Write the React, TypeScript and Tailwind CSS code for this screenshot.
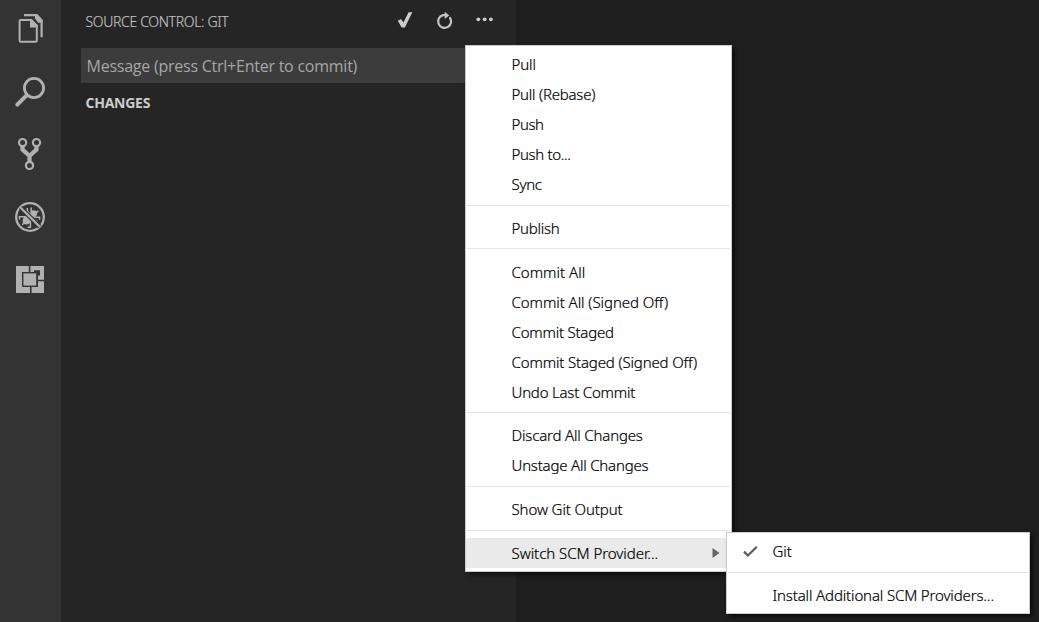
import type { ReactNode } from 'react';

function ActivityIcon({ viewBox, height, children }: { viewBox: string; height: string; children: ReactNode }) {
  return (
    <button className={`block w-full ${height}`}>
      <svg viewBox={viewBox} className="block h-full w-full" fill="none" stroke="#b1b1b1">
        {children}
      </svg>
    </button>
  );
}

function ActivityBar() {
  return (
    <nav className="flex w-[61px] shrink-0 flex-col bg-[#333333]">
      <ActivityIcon viewBox="0 0 61 60" height="h-[60px]">
        <path d="M24 15.2H36.6L41.6 20.6V37.2" strokeWidth="2.2" />
        <path d="M35 14.2H37.3L42.7 20V22.8H38.2L35 18.5Z" fill="#b1b1b1" stroke="none" />
        <path d="M20.8 20H31.2L36.8 25.6V40.6Q36.8 41.8 35.6 41.8H20.8Q19.6 41.8 19.6 40.6V21.2Q19.6 20 20.8 20Z" strokeWidth="2" />
        <path d="M30 19.2H31.8L37.7 25.2V27.4H30Z" fill="#b1b1b1" stroke="none" />
      </ActivityIcon>
      <ActivityIcon viewBox="0 60 61 63" height="h-[63px]">
        <circle cx="34" cy="88" r="9.6" strokeWidth="2.8" />
        <path d="M26.6 95.4L17.3 104.7" strokeWidth="4" strokeLinecap="round" />
      </ActivityIcon>
      <ActivityIcon viewBox="0 123 61 63" height="h-[63px]">
        <path d="M22.5 146V149.5L29.5 156L36.5 149.5V146M29.5 155V162" strokeWidth="4.2" />
        <circle cx="22.6" cy="142.6" r="3.6" strokeWidth="2.2" fill="#333333" />
        <circle cx="36.5" cy="142.6" r="3.6" strokeWidth="2.2" fill="#333333" />
        <circle cx="29.5" cy="165.4" r="3.6" strokeWidth="2.2" fill="#333333" />
      </ActivityIcon>
      <ActivityIcon viewBox="0 186 61 62" height="h-[62px]">
        <circle cx="30" cy="217" r="13.8" strokeWidth="2.3" />
        <ellipse cx="27.2" cy="219.9" rx="4.2" ry="5" transform="rotate(45 27.2 219.9)" fill="#b1b1b1" stroke="none" />
        <circle cx="33.6" cy="213.6" r="3.4" fill="#b1b1b1" stroke="none" />
        <path d="M26 216.8H19.5V219.4M30.4 221V227.3H27.4M31 211.5L31.3 207.5M29.8 214L27.3 210.8V208M36 212.5L38.4 211M34 217.2H39.6V219.8M33 219.2L37.5 221.5M24 222L22.5 225" strokeWidth="1.5" />
        <path d="M20.5 207.5L39.8 226.8" stroke="#333333" strokeWidth="4.5" />
        <path d="M20.2 207.2L39.8 226.8" strokeWidth="2.3" />
      </ActivityIcon>
      <ActivityIcon viewBox="0 248 61 62" height="h-[62px]">
        <path d="M16 266H44V293H16Z" fill="#b1b1b1" stroke="none" />
        <path d="M22 272H34V270.3H40V275.6H38V287H22Z" fill="#333333" stroke="none" />
        <path d="M23.4 273.4H36.2V285.6H23.4Z" fill="#b1b1b1" stroke="none" />
        <path d="M29.6 266V272M30.8 287V293M38 280.5H44" stroke="#333333" strokeWidth="1.6" />
      </ActivityIcon>
    </nav>
  );
}

function Header() {
  return (
    <header className="flex h-12 items-center pl-[24.5px]">
      <h1 className="-mt-[5px] flex-1 whitespace-nowrap text-[14px] font-light leading-5 tracking-[-0.33px] text-[#c4c4c4] [-webkit-text-stroke:0.15px]">
        SOURCE CONTROL: GIT
      </h1>
      <svg viewBox="391 0 125 48" className="h-12 w-[125px]" fill="none">
        <path d="M397.8 20.8L401 19L403.4 22.6L408.6 12.3H412.3L404.9 27.5H401.7Z" fill="#cccccc" />
        <path d="M449.6 17.2A6.5 6.5 0 1 1 443 15.1L446 15" stroke="#c5c5c5" strokeWidth="2.2" />
        <path d="M444.7 11.8L449.3 15.4L444.7 19Z" fill="#c5c5c5" />
        <circle cx="478.3" cy="19.3" r="1.9" fill="#cccccc" />
        <circle cx="484.6" cy="19.3" r="1.9" fill="#cccccc" />
        <circle cx="490.9" cy="19.3" r="1.9" fill="#cccccc" />
      </svg>
    </header>
  );
}

function Item({ label, tracking = 'tracking-[-0.1px]', children, active }: { label: string; tracking?: string; children?: ReactNode; active?: boolean }) {
  return (
    <li className={`flex h-[30px] items-center pl-[45.5px] text-[15px] text-black ${active ? 'bg-[#eaeaea] leading-[30px]' : 'pb-[2px] leading-7'}`}>
      <span className={`flex-1 whitespace-nowrap ${tracking}`}>{label}</span>
      {children}
    </li>
  );
}

function Separator({ space }: { space: string }) {
  return (
    <li className={`px-px ${space}`}>
      <div className="h-px bg-[#e5e5e5]" />
    </li>
  );
}

function ScmMenu() {
  return (
    <ul className="absolute left-[465px] top-[45px] h-[527px] w-[267px] border border-[#cccccc] bg-white pt-1 font-light shadow-[3px_3px_4px_rgba(0,0,0,0.55)] [-webkit-text-stroke:0.2px]">
      <Item label="Pull" />
      <Item label="Pull (Rebase)" tracking="tracking-[-0.23px]" />
      <Item label="Push" tracking="tracking-[-0.4px]" />
      <Item label="Push to..." tracking="tracking-[-0.35px]" />
      <Item label="Sync" tracking="tracking-[-0.3px]" />
      <Separator space="pt-[5px] pb-[8px]" />
      <Item label="Publish" tracking="tracking-[-0.27px]" />
      <Separator space="pt-[4px] pb-[9px]" />
      <Item label="Commit All" tracking="tracking-[0px]" />
      <Item label="Commit All (Signed Off)" tracking="tracking-[-0.06px]" />
      <Item label="Commit Staged" tracking="tracking-[-0.22px]" />
      <Item label="Commit Staged (Signed Off)" tracking="tracking-[-0.15px]" />
      <Item label="Undo Last Commit" tracking="tracking-[-0.2px]" />
      <Separator space="pt-[4px] pb-[8px]" />
      <Item label="Discard All Changes" tracking="tracking-[-0.17px]" />
      <Item label="Unstage All Changes" tracking="tracking-[-0.2px]" />
      <Separator space="pt-[5px] pb-[8px]" />
      <Item label="Show Git Output" />
      <Separator space="pt-[5px] pb-[7px]" />
      <Item label="Switch SCM Provider..." tracking="tracking-[-0.04px]" active>
        <svg viewBox="0 0 8 10" className="mr-[11px] h-[10px] w-2">
          <path d="M0.5 0L7.5 5L0.5 10Z" fill="#666666" />
        </svg>
      </Item>
    </ul>
  );
}

function ProviderMenu() {
  return (
    <ul className="absolute left-[726px] top-[532px] h-[82px] w-[304px] border border-[#cccccc] bg-white pt-1 font-light shadow-[3px_3px_4px_rgba(0,0,0,0.55)] [-webkit-text-stroke:0.2px]">
      <li className="flex h-[30px] items-center pb-[2px] pl-[16px] text-[15px] leading-7 text-black">
        <svg viewBox="0 0 15 12" className="h-3 w-[15px]" fill="none">
          <path d="M1 6.6L4.9 10.5L13.8 1.7" stroke="#5a5a5a" strokeWidth="2.2" />
        </svg>
        <span className="pl-[14.5px] tracking-[-0.1px]">Git</span>
      </li>
      <Separator space="pt-[5px] pb-[8px]" />
      <Item label="Install Additional SCM Providers..." tracking="tracking-[-0.14px]" />
    </ul>
  );
}

export default function App() {
  return (
    <div className="relative flex h-[622px] w-[1039px] overflow-hidden bg-[#1e1e1e] font-['Noto_Sans','Open_Sans',sans-serif]">
      <ActivityBar />
      <aside className="w-[455px] shrink-0 bg-[#252526]">
        <Header />
        <div className="ml-5 flex h-[35px] items-center bg-[#3c3c3c] pl-[5.5px] pt-[2px] text-[16px] leading-[33px] text-[#a6a6a6]">
          <span className="whitespace-nowrap font-['Open_Sans'] tracking-[-0.24px]">Message (press Ctrl+Enter to commit)</span>
        </div>
        <h2 className="flex h-10 items-center pl-[24.5px] font-['Open_Sans'] text-[14px] font-bold leading-10 tracking-[-0.25px] text-[#cccccc]">
          CHANGES
        </h2>
      </aside>
      <main className="flex-1 bg-[#1e1e1e]" />
      <ScmMenu />
      <ProviderMenu />
    </div>
  );
}
